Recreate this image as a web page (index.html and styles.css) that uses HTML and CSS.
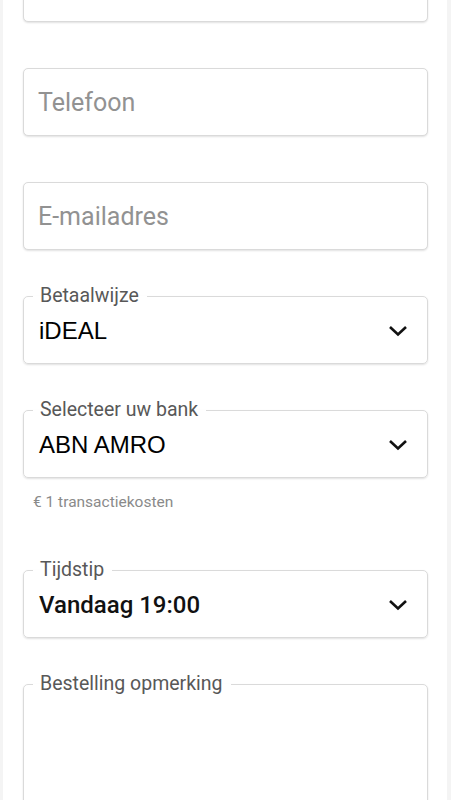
FILE: index.html
```html
<!DOCTYPE html>
<html lang="nl">
<head>
    <meta charset="UTF-8">
    <meta name="viewport" content="width=device-width, initial-scale=1.0">
    <title>Bestellen</title>
    <link rel="stylesheet" href="styles.css">
</head>
<body>
    <div class="page">
        <form class="order-form">
            <input class="text-field first" type="text" placeholder="Achternaam">

            <input class="text-field" type="tel" placeholder="Telefoon">

            <input class="text-field" type="email" placeholder="E-mailadres">

            <fieldset class="outlined">
                <legend>Betaalwijze</legend>
                <div class="select-value">
                    <span class="value system">iDEAL</span>
                    <svg class="chevron" width="20" height="12" viewBox="0 0 20 12"><polyline points="2,2 10,9.5 18,2" fill="none" stroke="#111" stroke-width="2.6"/></svg>
                </div>
            </fieldset>

            <div class="bank-group">
                <fieldset class="outlined">
                    <legend>Selecteer uw bank</legend>
                    <div class="select-value">
                        <span class="value system">ABN AMRO</span>
                        <svg class="chevron" width="20" height="12" viewBox="0 0 20 12"><polyline points="2,2 10,9.5 18,2" fill="none" stroke="#111" stroke-width="2.6"/></svg>
                    </div>
                </fieldset>
                <p class="hint">€ 1 transactiekosten</p>
            </div>

            <fieldset class="outlined">
                <legend>Tijdstip</legend>
                <div class="select-value">
                    <span class="value">Vandaag 19:00</span>
                    <svg class="chevron" width="20" height="12" viewBox="0 0 20 12"><polyline points="2,2 10,9.5 18,2" fill="none" stroke="#111" stroke-width="2.6"/></svg>
                </div>
            </fieldset>

            <fieldset class="outlined">
                <legend>Bestelling opmerking</legend>
                <textarea class="remark" rows="5"></textarea>
            </fieldset>
        </form>
    </div>
</body>
</html>
```

FILE: styles.css
```css
body {
    margin: 0;
    background-color: #f4f4f4;
    font-family: Roboto, "Liberation Sans", Arial, sans-serif;
    overflow: hidden;
}

.page {
    margin: 0 4px 0 3px;
    background-color: #ffffff;
    min-height: 100vh;
}

.order-form {
    display: flex;
    flex-direction: column;
    gap: 46px;
    padding: 0 19px 0 20px;
}

.text-field {
    display: block;
    box-sizing: border-box;
    width: 100%;
    height: 68px;
    margin: 0;
    padding: 0 14px;
    border: 1px solid #dadada;
    border-radius: 5px;
    box-shadow: 0 1px 2px rgba(0, 0, 0, 0.12);
    font-family: Roboto, sans-serif;
    font-size: 25px;
    color: #222;
    background: #fff;
    outline: none;
}

.text-field::placeholder {
    color: #929292;
}

.text-field.first {
    margin-top: -46px;
}

/* outlined fields with label in the border */
.outlined {
    margin: -10px 0 0 0;
    padding: 11px 20px 18px 15px;
    border: 1px solid #dadada;
    border-radius: 5px;
    box-shadow: 0 1px 2px rgba(0, 0, 0, 0.12);
    min-width: 0;
}

.outlined legend {
    margin-left: -6px;
    padding: 0 8px 0 7px;
    font-size: 19.5px;
    line-height: 20px;
    color: #585858;
}

.select-value {
    display: flex;
    align-items: center;
    justify-content: space-between;
    height: 28px;
}

.value {
    font-family: Roboto, sans-serif;
    font-size: 24px;
    line-height: 28px;
    font-weight: 500;
    color: #111;
}

.value.system {
    font-family: "Liberation Sans", Arial, sans-serif;
    font-weight: 400;
    color: #000;
}

.chevron {
    display: block;
    margin-right: -1px;
}

.bank-group {
    display: flex;
    flex-direction: column;
}

.hint {
    margin: 15px 0 13px 10px;
    font-size: 15.5px;
    color: #8a8a8a;
}

.remark {
    display: block;
    width: 100%;
    box-sizing: border-box;
    height: 160px;
    border: none;
    resize: none;
    outline: none;
    font-family: Roboto, sans-serif;
    font-size: 20px;
}
```
